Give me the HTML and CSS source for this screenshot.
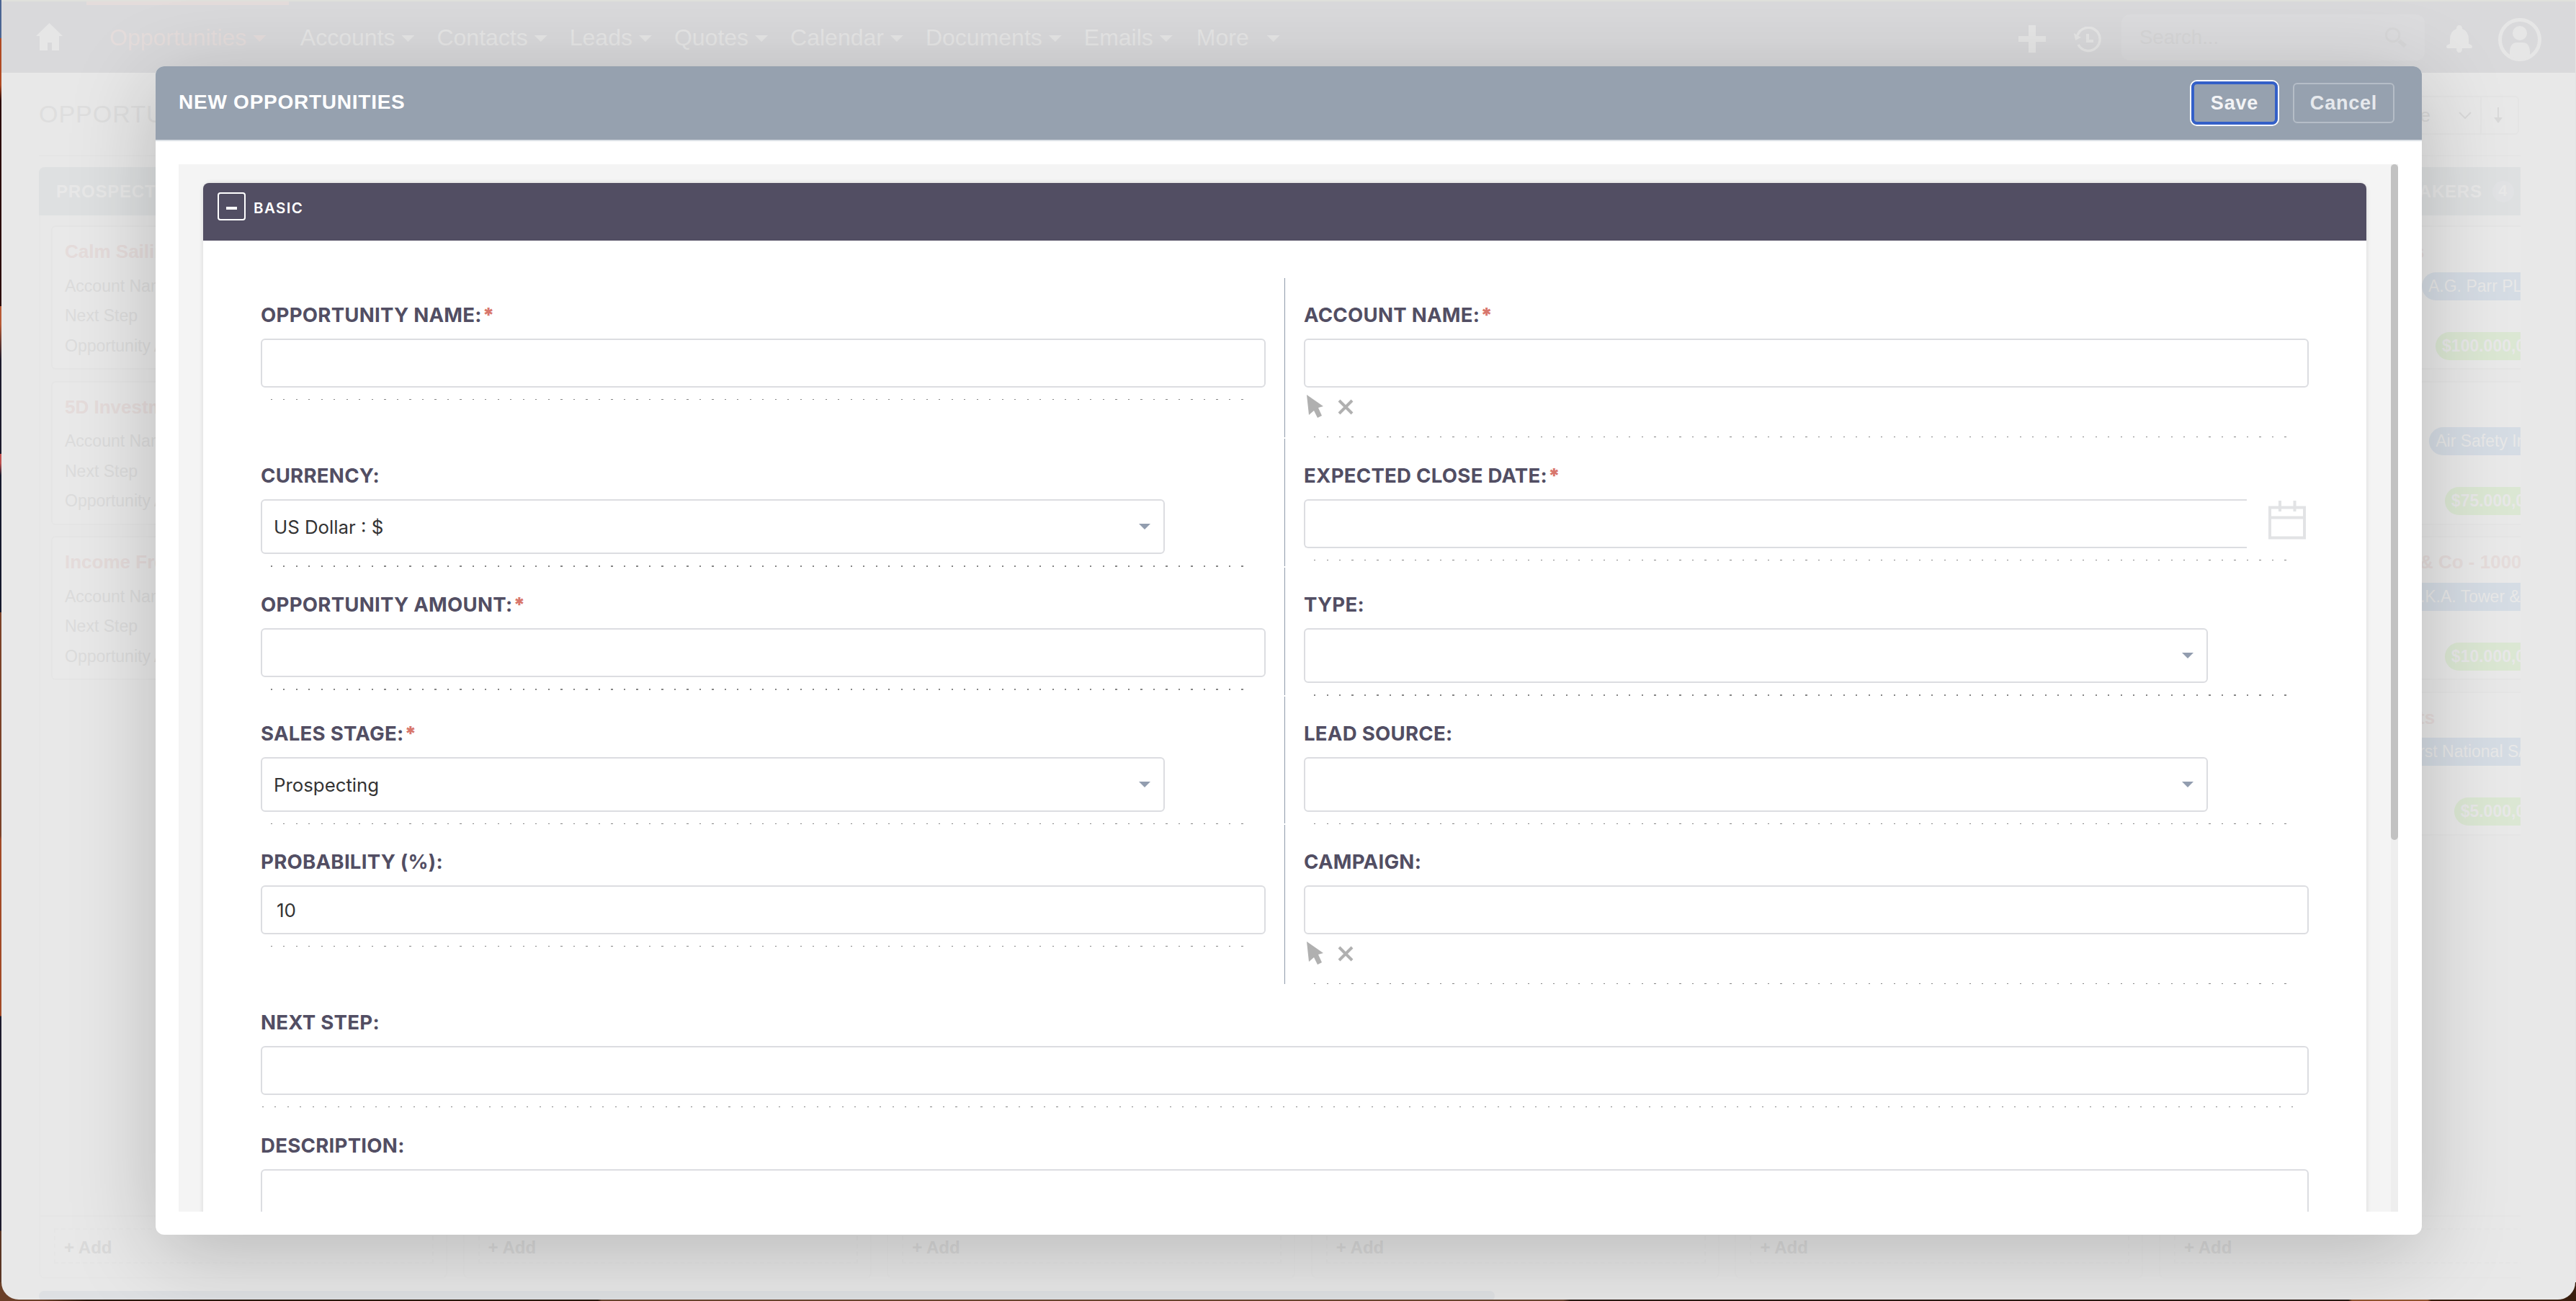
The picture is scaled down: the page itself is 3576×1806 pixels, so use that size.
FILE: index.html
```html
<!DOCTYPE html>
<html lang="en">
<head>
<meta charset="utf-8">
<title>New Opportunities</title>
<link rel="stylesheet" href="styles.css">
</head>
<body>
<div class="window">
  <header class="nav">
    <svg class="home" viewBox="0 0 37 38"><path d="M18.500 0L37 18H32V38H22V27H16V38H5V18H0Z"/></svg>
    <nav class="menu">
      <a class="menu-item active">Opportunities<i class="caret"></i></a>
      <a class="menu-item">Accounts<i class="caret"></i></a>
      <a class="menu-item">Contacts<i class="caret"></i></a>
      <a class="menu-item">Leads<i class="caret"></i></a>
      <a class="menu-item">Quotes<i class="caret"></i></a>
      <a class="menu-item">Calendar<i class="caret"></i></a>
      <a class="menu-item">Documents<i class="caret"></i></a>
      <a class="menu-item">Emails<i class="caret"></i></a>
      <a class="menu-item more">More<i class="caret"></i></a>
    </nav>
    <div class="tools">
      <svg class="plus" viewBox="0 0 38 38"><path d="M14 0H24V15H38V23H24V38H14V23H0V15H14Z"/></svg>
      <svg class="history" viewBox="0 0 38 36"><path d="M5 12A16 16 0 1 1 6 25" fill="none" stroke="#e6e6e6" stroke-width="3.500"/><path d="M0 9L10 15L2 19Z"/><path d="M19 10V20H27" fill="none" stroke="#e6e6e6" stroke-width="4"/></svg>
      <div class="search"><span>Search...</span><svg viewBox="0 0 32 30"><circle cx="12" cy="11" r="9.500" fill="none" stroke="#d7d7d8" stroke-width="3"/><path d="M21 19L30 27" stroke="#d7d7d8" stroke-width="6"/></svg></div>
      <svg class="bell" viewBox="0 0 36 38"><path d="M18 0Q22 0 22 5Q31 8 31 20V26Q36 27 36 30Q36 32 33 32H22Q22 38 18 38Q14 38 14 32H3Q0 32 0 30Q0 27 5 26V20Q5 8 14 5Q14 0 18 0Z"/></svg>
      <svg class="user" viewBox="0 0 60 60"><circle cx="30" cy="30" r="27.500" fill="none" stroke="#e6e6e6" stroke-width="5"/><circle cx="30" cy="21" r="10"/><path d="M16 52V46Q17 34 26 34H34Q43 34 44 46V52Q30 60 16 52Z"/></svg>
    </div>
  </header>
  <main class="page">
    <div class="page-head">
      <h1>OPPORTUNITIES</h1>
      <div class="sort"><span>Expected Close Date</span><svg viewBox="0 0 18 10"><path d="M1 1L9 9L17 1" fill="none" stroke="#d9d9d9" stroke-width="2"/></svg><b><svg viewBox="0 0 12 22"><path d="M6 0V20" stroke="#d9d9d9" stroke-width="2"/><path d="M0 14H12L6 22Z" fill="#d9d9d9"/></svg></b></div>
    </div>
    <div class="board">
      <section class="col">
        <h2>PROSPECTING</h2>
        <div class="cards">
          <article class="card"><h3>Calm Sailing Inc</h3><p>Account Name</p><p>Next Step</p><p>Opportunity Amount</p></article>
          <article class="card"><h3>5D Investments</h3><p>Account Name</p><p>Next Step</p><p>Opportunity Amount</p></article>
          <article class="card"><h3>Income Free</h3><p>Account Name</p><p>Next Step</p><p>Opportunity Amount</p></article>
        </div>
        <footer><span>+ Add</span></footer>
      </section>
      <section class="col"><h2></h2><div class="cards"></div><footer><span>+ Add</span></footer></section>
      <section class="col"><h2></h2><div class="cards"></div><footer><span>+ Add</span></footer></section>
      <section class="col"><h2></h2><div class="cards"></div><footer><span>+ Add</span></footer></section>
      <section class="col"><h2></h2><div class="cards"></div><footer><span>+ Add</span></footer></section>
      <section class="col">
        <h2 class="wide"><span>MAKERS</span><em>4</em><span>$190</span></h2>
        <div class="cards">
          <article class="card"><h3 class="t1">s</h3><p>Account Name<b class="acc">A.G. Parr PLC</b></p><p>Next Step</p><p>Amount<b class="amt">$100.000,00</b></p></article>
          <article class="card"><h3>Air Safety</h3><p>Account Name<b class="acc">Air Safety Inc</b></p><p>Next Step</p><p>Amount<b class="amt">$75.000,00</b></p></article>
          <article class="card"><h3 class="t3">&amp; Co - 1000 units</h3><p>Account Name<b class="acc">J.K.A. Tower &amp;...</b></p><p>Next Step</p><p>Amount<b class="amt">$10.000,00</b></p></article>
          <article class="card"><h3 class="t4">ts</h3><p>Account Name<b class="acc">First National S/A</b></p><p>Next Step</p><p>Amount<b class="amt">$5.000,00</b></p></article>
        </div>
        <footer><span>+ Add</span></footer>
      </section>
    </div>
    <div class="board-scroll"></div>
  </main>
</div>

<div class="modal">
  <div class="modal-head">
    <h2>NEW OPPORTUNITIES</h2>
    <button class="btn save">Save</button>
    <button class="btn">Cancel</button>
  </div>
  <div class="modal-body">
    <div class="scroll">
      <div class="panel">
        <div class="panel-head"><span class="toggle"></span><h3>BASIC</h3></div>
        <div class="form">
          <div class="cell"><label>OPPORTUNITY NAME:<i>*</i></label><div class="input"></div><div class="dots"></div></div>
          <div class="cell right"><label>ACCOUNT NAME:<i>*</i></label><div class="input"></div>
            <div class="picks"><svg class="cursor" viewBox="0 0 23 32"><path d="M0 0L23 16L16 18L21 29L15 32L10 22L3 28Z"/></svg><svg class="x" viewBox="0 0 22 22"><path d="M2 2L20 20M20 2L2 20"/></svg></div>
            <div class="dots"></div></div>
          <div class="cell"><label>CURRENCY:</label><div class="select">US Dollar : $<i class="arrow"></i></div><div class="dots bold"></div></div>
          <div class="cell right"><label>EXPECTED CLOSE DATE:<i>*</i></label>
            <div class="date"><div class="input open"></div><svg viewBox="0 0 52 54"><path d="M2 9.500H50V51.500H2ZM2 23.500H50M16 0V15M36.500 0V15"/></svg></div>
            <div class="dots"></div></div>
          <div class="cell"><label>OPPORTUNITY AMOUNT:<i>*</i></label><div class="input"></div><div class="dots bold"></div></div>
          <div class="cell right"><label>TYPE:</label><div class="select"><i class="arrow"></i></div><div class="dots bold"></div></div>
          <div class="cell"><label>SALES STAGE:<i>*</i></label><div class="select">Prospecting<i class="arrow"></i></div><div class="dots"></div></div>
          <div class="cell right"><label>LEAD SOURCE:</label><div class="select"><i class="arrow"></i></div><div class="dots"></div></div>
          <div class="cell"><label>PROBABILITY (%):</label><div class="input">10</div><div class="dots"></div></div>
          <div class="cell right"><label>CAMPAIGN:</label><div class="input"></div>
            <div class="picks"><svg class="cursor" viewBox="0 0 23 32"><path d="M0 0L23 16L16 18L21 29L15 32L10 22L3 28Z"/></svg><svg class="x" viewBox="0 0 22 22"><path d="M2 2L20 20M20 2L2 20"/></svg></div>
            <div class="dots"></div></div>
          <div class="cell full"><label>NEXT STEP:</label><div class="input"></div><div class="dots"></div></div>
          <div class="cell full"><label>DESCRIPTION:</label><div class="input area"></div></div>
        </div>
      </div>
      <div class="track"><div class="thumb"></div></div>
    </div>
  </div>
</div>
</body>
</html>
```
FILE: styles.css
```css
* { box-sizing: border-box; }
body {
  margin: 0;
  width: 3576px;
  height: 1806px;
  overflow: hidden;
  position: relative;
  padding: 0 1px 2px 2px;
  background:
    linear-gradient(90deg, #6b4028 0 60px, #2c190c 120px 830px, #6b4630 835px 2170px, #2a1a12 2180px 3260px, #94562f 3265px 3370px, #3a1e0e 3375px) 0 1780px / 100% 26px no-repeat,
    linear-gradient(#4a6492 0 53px, #b04a22 53px 118px, #2a0805 140px 425px, #b85a35 425px 450px, #1b1a2c 500px 630px, #c0504f 630px 643px, #15182c 660px 850px, #7a4128 850px 1160px, #a24a26 1165px 1410px, #1c1a2c 1411px 1708px, #5a3524 1709px) 0 0 / 2px 100% no-repeat,
    #e4e4e4;
  font-family: "Liberation Sans", Arial, sans-serif;
}
h1, h2, h3, p { margin: 0; font-weight: 400; }
i { font-style: normal; }

/* faded page behind the dialog */
.window {
  height: 1804px;
  overflow: hidden;
  display: flex;
  flex-direction: column;
  background: #e8e8e8;
  border-top: 2px solid #e0e1dc;
  border-radius: 0 0 24px 24px;
}
.nav {
  flex: none;
  height: 99px;
  display: flex;
  background: #d9d9db;
  padding: 0 47px 0 48px;
  color: #e6e6e6;
  fill: #e6e6e6;
}
.home { width: 37px; height: 38px; margin: 30px 33px 0 0; }
.menu { display: flex; font-size: 32px; line-height: 36px; }
.menu-item { display: flex; padding: 32px 15.500px 0 15.500px; }
.menu-item.active { padding: 27px 32px 0; border-top: 5px solid #e4dcdb; color: #e5dddc; }
.caret { margin: 15px 0 0 9px; width: 18px; height: 9px; background: currentColor; clip-path: polygon(0 0, 100% 0, 50% 100%); }
.more { margin-left: 2px; }
.more .caret { margin-left: 25px; }
.tools { margin-left: auto; display: flex; }
.plus { width: 38px; height: 38px; margin: 33px 39px 0 0; }
.history { width: 38px; height: 36px; margin: 35px 28px 0 0; }
.search {
  width: 421px; height: 64px; margin: 18px 30px 0 0; padding: 0 25px;
  border-radius: 12px; background: #dcdcde; color: #d6d6d7;
  font-size: 27.500px; line-height: 64px; display: flex; justify-content: space-between; align-items: center;
}
.search svg { width: 31px; height: 29px; }
.bell { width: 36px; height: 38px; margin: 33px 36px 0 0; }
.user { width: 60px; height: 60px; margin-top: 23px; }

.page { flex: 1; padding: 0 76px 0 52px; overflow: hidden; display: flex; flex-direction: column; }
.page-head { height: 116px; display: flex; justify-content: space-between; border-bottom: 2px solid #e5e5e5; padding-top: 32px; flex: none; }
.page-head h1 { font-size: 34px; line-height: 50px; letter-spacing: 1px; color: #dedede; }
.sort { display: flex; align-items: center; height: 54px; border: 2px solid #e4e4e4; border-radius: 6px; font-size: 26px; color: #d9d9d9; margin-right: 2px; }
.sort > svg { width: 18px; height: 10px; margin: 0 12px 0 39px; }
.sort b { width: 52px; height: 54px; border-left: 2px solid #e4e4e4; display: flex; justify-content: center; align-items: center; padding-right: 4px; }
.sort b svg { width: 12px; height: 22px; }
.board { display: flex; gap: 21.600px; margin-top: 15px; height: 1543px; flex: none; overflow: hidden; }
.col { width: 567px; flex: none; display: flex; flex-direction: column; border: 2px solid #e6e6e6; border-top: 0; border-radius: 8px; }
.col h2 { height: 67px; margin: 0 -2px; padding-left: 24px; background: #dee0e1; color: #e8e8e8; border-radius: 8px 8px 0 0; font-size: 24px; font-weight: 700; letter-spacing: .8px; line-height: 66px; display: flex; align-items: center; }
.col h2.wide { padding-left: 340px; }
.col h2 em { width: 30px; height: 30px; border-radius: 50%; background: #e1e2e4; margin: 0 12px 0 14px; font: 700 22px/28px "Liberation Sans", sans-serif; text-align: center; }
.cards { flex: 1; padding: 14px 15px 0; display: flex; flex-direction: column; gap: 15.500px; }
.card { height: 200px; border: 2px solid #e5e5e5; border-radius: 6px; padding: 14px 18px 0 17px; white-space: nowrap; background: #e9e9e9; }
.card h3 { font-size: 26px; font-weight: 700; line-height: 40px; margin-bottom: 7px; color: #e5dcdb; }
.card .t1 { padding-left: 318px; }
.card .t3 { padding-left: 326px; }
.card .t4 { padding-left: 324px; }
.card p { display: flex; justify-content: space-between; align-items: center; height: 41.500px; padding-top: 1px; font-size: 23px; color: #dcdcdc; }
.card b { height: 39px; line-height: 39px; padding: 0 9px; border-radius: 20px; color: #e8e8e8; font-weight: 400; }
.card .acc { background: #d5dce4; }
.card .amt { background: #dbe7d3; font-weight: 700; }
.col footer { height: 86px; border-top: 2px solid #e5e5e5; padding: 16px 17px 0 19px; }
.col footer span { display: block; height: 49px; border: 2px dashed #e5e5e5; padding-left: 12px; font: 700 24px/50px "Liberation Sans", sans-serif; color: #dadada; }
.board-scroll { width: 2021px; height: 14px; flex: none; margin-top: 17px; border-radius: 7px; background: #dee0e3; }

/* dialog */
.modal {
  position: absolute; left: 216px; top: 92px; width: 3146px; height: 1622px;
  border-radius: 12px; overflow: visible; background: #fff;
  box-shadow: 0 24px 120px rgba(0, 0, 0, .21);
  display: flex; flex-direction: column;
}
.modal-head {
  height: 104px; background: #96a1af; border-bottom: 2px solid #dce1e7; border-radius: 12px 12px 0 0;
  display: flex; padding: 0 38px 0 32px;
}
.modal-head h2 { flex: 1; font-size: 28px; font-weight: 700; line-height: 32px; letter-spacing: .75px; color: #fff; margin-top: 34px; }
.btn {
  height: 56px; width: 141px; margin: 23px 0 0 21px; padding: 0; border: 2px solid #b5bdc7; border-radius: 6px; background: none;
  font: 700 27px/48px "Liberation Sans", sans-serif; letter-spacing: .8px; color: #e6e9ed;
}
.btn.save { width: 120px; height: 60px; margin: 21px 0 0; border: 4px solid #3460c8; border-radius: 8px; box-shadow: 0 0 0 2px #fff; color: #f3f4f6; }
.modal-body { flex: 1; padding: 32px 33px 32px 32px; min-height: 0; }
.scroll { height: 1454px; overflow: hidden; background: #f4f4f4; display: flex; padding-left: 34px; }
.panel { width: 3003px; height: 1500px; margin-top: 26px; background: #fff; border-radius: 12px 12px 0 0; box-shadow: 0 0 6px rgba(0, 0, 0, .12); flex: none; }
.track { margin-left: auto; width: 10px; background: #eee; }
.thumb { width: 10px; height: 938px; border-radius: 5px; background: #c2c2c2; }
.panel-head { height: 80px; background: #524e63; border-radius: 8px 8px 0 0; display: flex; padding: 13px 0 0 20px; }
.toggle { width: 39px; height: 39px; border: 2px solid #fff; border-radius: 4px; display: flex; }
.toggle::after { content: ""; width: 15px; height: 4px; margin: 18px auto 0; background: #fff; }
.panel-head h3 { margin: 9px 0 0 11px; font-family: Inter, sans-serif; font-size: 20.500px; line-height: 26px; letter-spacing: 1.400px; font-weight: 600; color: #fff; }
.form {
  display: grid; grid-template-columns: 1421px 1422px; grid-template-rows: 221px 177px 177px 176px 221px 169px 200px;
  row-gap: 2px; padding: 52px 80px 0; font-family: Inter, sans-serif; align-items: stretch;
}
.cell { padding-right: 26px; min-width: 0; }
.cell.right { padding: 0 0 0 26px; border-left: 1px solid #8f9bab; }
.cell.full { grid-column: 1 / 3; padding: 0; }
.cell label { display: block; height: 84px; padding-top: 35px; font-size: 27.600px; line-height: 32px; letter-spacing: .25px; font-weight: 700; color: #524e63; }
.cell label i { color: #d8766c; margin-left: 1px; font-weight: 900; }
.input { height: 68px; border: 2px solid #dcdde1; border-radius: 6px; padding-left: 20px; font-size: 26px; line-height: 65px; color: #333; }
.area { height: 140px; }
.select { width: 1255px; height: 76px; border: 2px solid #dcdde1; border-radius: 6px; padding: 0 18px 0 16px; font-size: 25.800px; line-height: 75px; color: #333; display: flex; align-items: center; }
.arrow { width: 16px; height: 8px; margin-left: auto; background: #929daf; clip-path: polygon(0 0, 100% 0, 50% 100%); }
.picks { height: 52px; display: flex; padding: 10px 0 0 4px; }
.cursor { width: 23px; height: 32px; fill: #b0b0b0; }
.x { width: 22px; height: 22px; margin: 6px 0 0 20px; stroke: #b0b0b0; stroke-width: 4px; }
.date { display: flex; }
.open { width: 1309px; border-right: 0; border-radius: 6px 0 0 6px; }
.date svg { width: 52px; height: 54px; margin: 2px 0 0 30px; fill: none; stroke: #e2e3e5; stroke-width: 4px; }
.dots { height: 1px; width: 1350px; margin: 16px 0 0 14px; background: repeating-linear-gradient(90deg, #858585 0 2px, transparent 2px 17.500px); }
.dots.bold { height: 2px; }
.full .dots { width: 2822px; margin-left: 2px; }
```
